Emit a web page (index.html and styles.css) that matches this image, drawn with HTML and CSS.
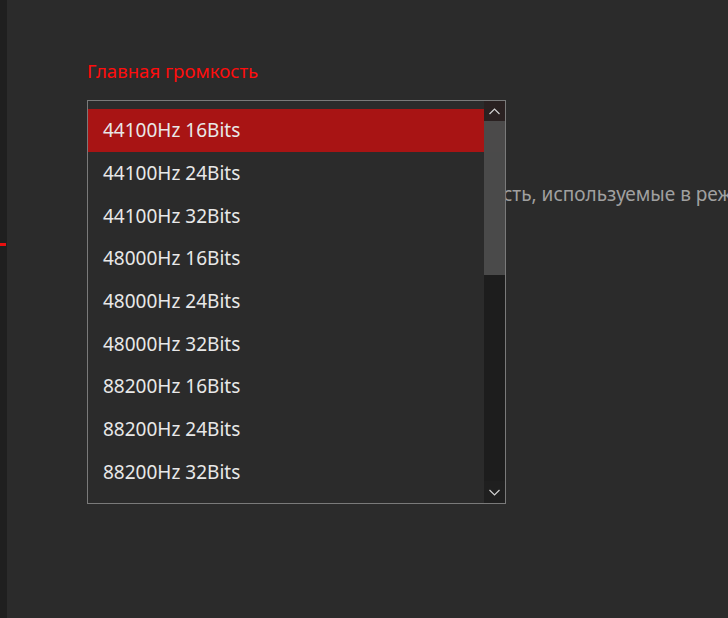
FILE: index.html
```html
<!DOCTYPE html>
<html lang="ru">
<head>
<meta charset="utf-8">
<link rel="stylesheet" href="styles.css">
</head>
<body>
<div class="app">
  <aside class="sidebar"><span class="marker"></span></aside>
  <main class="content">
    <h2 class="title">Главная громкость</h2>
    <div class="combo-slot"></div>
    <p class="desc">Частота дискретизации и разрядность, используемые в режиме общего доступа.</p>
    <div class="popup">
      <ul class="list">
        <li class="item selected">44100Hz 16Bits</li>
        <li class="item">44100Hz 24Bits</li>
        <li class="item">44100Hz 32Bits</li>
        <li class="item">48000Hz 16Bits</li>
        <li class="item">48000Hz 24Bits</li>
        <li class="item">48000Hz 32Bits</li>
        <li class="item">88200Hz 16Bits</li>
        <li class="item">88200Hz 24Bits</li>
        <li class="item">88200Hz 32Bits</li>
      </ul>
      <div class="scrollbar">
        <div class="arrow up"><svg width="11" height="7" viewBox="0 0 11 7"><path d="M0.5 6 L5.5 1 L10.5 6" fill="none" stroke="#d0d0d0" stroke-width="1.2"/></svg></div>
        <div class="track"><div class="thumb"></div></div>
        <div class="arrow down"><svg width="11" height="7" viewBox="0 0 11 7"><path d="M0.5 1 L5.5 6 L10.5 1" fill="none" stroke="#d0d0d0" stroke-width="1.2"/></svg></div>
      </div>
    </div>
  </main>
</div>
</body>
</html>
```
FILE: styles.css
```css
* { box-sizing: border-box; }
html, body { margin: 0; padding: 0; }
body {
  width: 728px;
  height: 618px;
  overflow: hidden;
  background: #2b2b2b;
  font-family: "Noto Sans", "Open Sans", sans-serif;
}
.app { display: flex; height: 618px; }
.sidebar {
  flex: 0 0 7px;
  background: #1f1f1f;
  position: relative;
}
.marker {
  position: absolute;
  left: 0;
  top: 243px;
  width: 6px;
  height: 3px;
  background: #e81010;
}
.content {
  position: relative;
  flex: 1;
  min-width: 0;
  overflow: hidden;
  padding: 58px 0 0 80px;
}
.title {
  margin: 0;
  font-size: 18.6px;
  font-weight: 400;
  color: #ff0d0d;
  line-height: 26px;
}
.combo-slot { height: 40px; margin-top: 8px; }
.desc {
  margin: 49px 0 0;
  padding-left: 89px;
  font-size: 19px;
  color: #a0a0a0;
  white-space: nowrap;
  line-height: 26px;
}
.popup {
  position: absolute;
  left: 80px;
  top: 100px;
  width: 419px;
  height: 404px;
  border: 1px solid #7a7a7a;
  background: #2b2b2b;
  padding-top: 8px;
  overflow: hidden;
}
.list { list-style: none; margin: 0; padding: 0; }
.item {
  height: 42.67px;
  display: flex;
  align-items: center;
  padding-left: 15px;
  font-size: 19px;
  color: #e8e8e8;
}
.item.selected { background: #a81414; }
.scrollbar {
  position: absolute;
  top: 0;
  right: 0;
  width: 21px;
  height: 402px;
  display: flex;
  flex-direction: column;
}
.arrow {
  height: 20px;
  display: flex;
  align-items: center;
  justify-content: center;
  background: #2a2121;
}
.arrow.down { background: #1f1f1f; height: 22px; }
.track { flex: 1; background: rgba(28, 28, 28, 0.92); }
.thumb { height: 154px; background: rgba(80, 80, 80, 0.9); }
```
